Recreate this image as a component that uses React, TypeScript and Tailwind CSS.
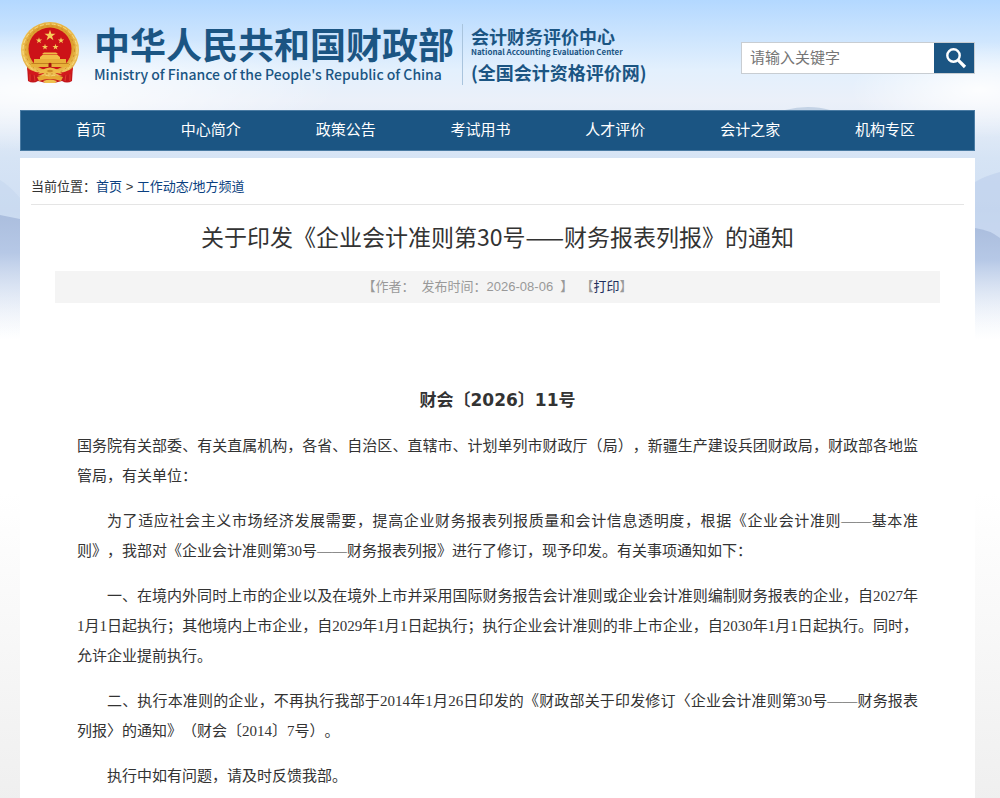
import React, { useState } from 'react';

const NAV_ITEMS = ['首页', '中心简介', '政策公告', '考试用书', '人才评价', '会计之家', '机构专区'];

const PARAGRAPHS = [
  { indent: false, text: '国务院有关部委、有关直属机构，各省、自治区、直辖市、计划单列市财政厅（局），新疆生产建设兵团财政局，财政部各地监管局，有关单位：' },
  { indent: true, text: '为了适应社会主义市场经济发展需要，提高企业财务报表列报质量和会计信息透明度，根据《企业会计准则——基本准则》，我部对《企业会计准则第30号——财务报表列报》进行了修订，现予印发。有关事项通知如下：' },
  { indent: true, text: '一、在境内外同时上市的企业以及在境外上市并采用国际财务报告会计准则或企业会计准则编制财务报表的企业，自2027年1月1日起执行；其他境内上市企业，自2029年1月1日起执行；执行企业会计准则的非上市企业，自2030年1月1日起执行。同时，允许企业提前执行。' },
  { indent: true, text: '二、执行本准则的企业，不再执行我部于2014年1月26日印发的《财政部关于印发修订〈企业会计准则第30号——财务报表列报〉的通知》（财会〔2014〕7号）。' },
  { indent: true, text: '执行中如有问题，请及时反馈我部。' },
];

const STAR = 'M0 -1 L.225 -.309 L.951 -.309 L.363 .118 L.588 .809 L0 .382 L-.588 .809 L-.363 .118 L-.951 -.309 L-.225 -.309 Z';

const Emblem: React.FC = () => (
  <svg viewBox="0 0 60 64" className="w-[60px] h-16 shrink-0" aria-hidden="true">
    <defs>
      <radialGradient id="gold" cx="50%" cy="45%" r="55%">
        <stop offset="0.7" stopColor="#dd9f2f" />
        <stop offset="0.88" stopColor="#f0c65a" />
        <stop offset="1" stopColor="#d9a03a" />
      </radialGradient>
    </defs>
    <path d="M7 44 L8 60 Q13 63 18 60 Q30 64 42 60 Q47 63 52 60 L53 44 Z" fill="#c4161c" />
    <path d="M10 52 L10 60 M50 52 L50 60 M14 53 L15 60 M46 53 L45 60" stroke="#e43a2e" strokeWidth="1" />
    <ellipse cx="30" cy="29" rx="29" ry="28" fill="url(#gold)" />
    <ellipse cx="30" cy="29" rx="24.5" ry="24" fill="none" stroke="#cf8f2b" strokeWidth="1" strokeDasharray="2 3" />
    <ellipse cx="30" cy="29" rx="27" ry="26" fill="none" stroke="#f8dc84" strokeWidth="1" strokeDasharray="4 2" />
    <ellipse cx="30" cy="28" rx="21.5" ry="21.5" fill="#cc1218" />
    <g fill="#f6cf5b">
      <path d={STAR} transform="translate(30 14.5) scale(5.8)" />
      <path d={STAR} transform="translate(19 19.5) scale(3.3)" />
      <path d={STAR} transform="translate(41 19.5) scale(3.3)" />
      <path d={STAR} transform="translate(25 26) scale(3.2)" />
      <path d={STAR} transform="translate(35.5 26) scale(3.2)" />
    </g>
    <path d="M22 33 L24 31.5 H36 L38 33 Z M20 36 L23 33.5 H37 L40 36 V38 H20 Z" fill="#f0bf48" />
    <path d="M14 38 H46 V42 H49 V46 H11 V42 H14 Z" fill="#e8b03a" />
    <path d="M11.5 42.5 H48.5" stroke="#b06a16" strokeWidth=".7" />
    <path d="M28.5 46 V42.5 Q30 41 31.5 42.5 V46 Z" fill="#a31212" />
    <path d="M7 47 Q18 54 26 50 Q22 57 9 53 Z M53 47 Q42 54 34 50 Q38 57 51 53 Z" fill="#d2191c" />
    <path d="M22 49 Q30 44 38 49 L42 53 Q30 50 18 53 Z" fill="#efbd48" />
    <path d="M26.5 50 Q30 47.5 33.5 50 Q30 52.5 26.5 50 Z" fill="#cf8a26" />
    <path d="M17 56 Q24 53 30 56 Q36 53 43 56 L41 60 Q30 56 19 60 Z" fill="#e6a933" />
    <path d="M23 60 Q30 57 37 60 L35 62 H25 Z" fill="#efc14f" />
  </svg>
);

const SearchIcon: React.FC = () => (
  <svg viewBox="0 0 22 22" className="w-[22px] h-[22px]" fill="none" stroke="#fff" aria-hidden="true">
    <circle cx="8.5" cy="8.5" r="6.2" strokeWidth="2.4" />
    <path d="M13.2 13.2 L20 20" strokeWidth="3.2" />
  </svg>
);

// hazy mountains behind the page, fading out below the header
const Scenery: React.FC = () => (
  <svg viewBox="0 0 1000 350" preserveAspectRatio="none" className="absolute inset-x-0 top-0 -z-10 w-full h-[350px]" aria-hidden="true">
    <defs>
      <linearGradient id="sky" x1="0" y1="0" x2="0" y2="1">
        <stop offset="0" stopColor="#b3d8ff" />
        <stop offset="0.1" stopColor="#cbe4fe" />
        <stop offset="0.2" stopColor="#e3f0fd" />
        <stop offset="0.29" stopColor="#ebf0f9" />
        <stop offset="0.45" stopColor="#d6e4f5" />
        <stop offset="0.6" stopColor="#d0dff3" />
        <stop offset="0.8" stopColor="#e3ebf7" />
        <stop offset="0.97" stopColor="#ffffff" />
      </linearGradient>
      <linearGradient id="ridge" x1="0" y1="0" x2="0" y2="1">
        <stop offset="0" stopColor="#abbede" />
        <stop offset="0.3" stopColor="#b6c8e6" />
        <stop offset="1" stopColor="#ffffff" stopOpacity="0" />
      </linearGradient>
      <radialGradient id="glow">
        <stop offset="0" stopColor="#ffffff" stopOpacity="0.9" />
        <stop offset="1" stopColor="#ffffff" stopOpacity="0" />
      </radialGradient>
    </defs>
    <rect width="1000" height="350" fill="url(#sky)" />
    <ellipse cx="40" cy="90" rx="300" ry="60" fill="url(#glow)" />
    <ellipse cx="980" cy="90" rx="130" ry="48" fill="url(#glow)" />
    <path d="M785 110 Q797 107 808 107 Q820 107 830 110 Z" fill="#c3d2e5" />
    <path d="M0 180 Q10 186 20 198 V260 H0 Z" fill="#c4d6ee" fillOpacity="0.5" />
    <path d="M0 215 L20 219 V340 H0 Z" fill="url(#ridge)" />
    <path d="M1000 172 Q985 176 975 182 V240 H1000 Z" fill="#bccfeb" fillOpacity="0.6" />
    <path d="M975 228 Q990 230 1000 238 V335 H975 Z" fill="url(#ridge)" />
  </svg>
);

const Header: React.FC = () => {
  const [keyword, setKeyword] = useState('');

  return (
    <header className="flex items-start justify-between h-[110px] text-[#1b5583]">
      <div className="flex items-start pt-[21px]">
        <Emblem />
        <div className="ml-[14px] whitespace-nowrap">
          <h1 className="text-[36px] leading-[44px] font-bold">中华人民共和国财政部</h1>
          <p className="text-[14px] leading-[18px] font-medium">Ministry of Finance of the People's Republic of China</p>
        </div>
        <div className="ml-2 mt-[3px] pl-2 h-[61px] border-l border-[#a9c4dd] whitespace-nowrap">
          <p className="text-[18px] leading-[24px] font-bold">会计财务评价中心</p>
          <p className="text-[8px] leading-[8px] font-bold">National Accounting Evaluation Center</p>
          <p className="text-[18px] leading-[32px] font-bold">(全国会计资格评价网)</p>
        </div>
      </div>
      <form className="flex mt-[42px] h-8 border border-[#c8cdd2] bg-white" onSubmit={e => e.preventDefault()}>
        <input
          type="text"
          aria-label="请输入关键字"
          placeholder="请输入关键字"
          className="w-48 px-2 pb-0.5 text-[15px] text-[#333] placeholder:text-[#757575] outline-none"
          value={keyword}
          onChange={e => setKeyword(e.target.value)}
        />
        <button type="submit" aria-label="搜索" className="flex items-center justify-center w-10 pl-1 bg-[#1b5583]">
          <SearchIcon />
        </button>
      </form>
    </header>
  );
};

const App: React.FC = () => {
  return (
    <div className="relative isolate min-h-screen pl-5 pr-[25px] bg-linear-to-b from-white from-60% to-[#eeeeee] font-['Noto_Sans_CJK_SC',sans-serif] text-[#333] [text-spacing-trim:space-all]">
      <Scenery />
      <Header />

      <nav className="flex items-center justify-between h-[41px] pl-[55px] pr-[59px] pb-0.5 bg-[#1b5583] border border-[#4a7ba3] text-[15px] text-white">
        {NAV_ITEMS.map(item => (
          <a key={item} href="#">{item}</a>
        ))}
      </nav>

      <main className="mt-[7px] px-[11px] pb-8 bg-white">
        <div className="h-[47px] pt-[18px] border-b border-[#e5e5e5] text-[13px] leading-5">
          当前位置：<a href="#" className="text-[#0a3f80]">首页</a>
          <span className="font-['Liberation_Sans']"> &gt; </span>
          <a href="#" className="font-['Liberation_Sans','Noto_Sans_CJK_SC',sans-serif] text-[#0a3f80]">工作动态/地方频道</a>
        </div>

        <article className="px-6">
          <h2 className="pt-[14px] pb-[18px] text-center text-[23px] leading-[34px]">关于印发《企业会计准则第30号——财务报表列报》的通知</h2>
          <div className="h-8 bg-[#f4f4f4] text-center text-[13px] leading-8 text-[#999] font-['Liberation_Sans','Noto_Sans_CJK_SC',sans-serif] whitespace-pre">
            【作者：  发布时间：2026-08-06  】  【<a href="#" className="text-[#1d2d5c]">打印</a>】
          </div>

          <div className="px-[22px] pt-[82px] text-[15px] leading-[30px] font-['Liberation_Serif','Noto_Sans_CJK_SC',serif]">
            <h3 className="text-center text-[17px] font-bold font-['DejaVu_Sans','Noto_Sans_CJK_SC',sans-serif]">财会〔2026〕11号</h3>
            {PARAGRAPHS.map(p => (
              <p key={p.text} className={p.indent ? 'mt-[15px] indent-[30px] text-justify' : 'mt-4 text-justify'}>
                {p.text}
              </p>
            ))}
          </div>
        </article>
      </main>
    </div>
  );
};

export default App;
